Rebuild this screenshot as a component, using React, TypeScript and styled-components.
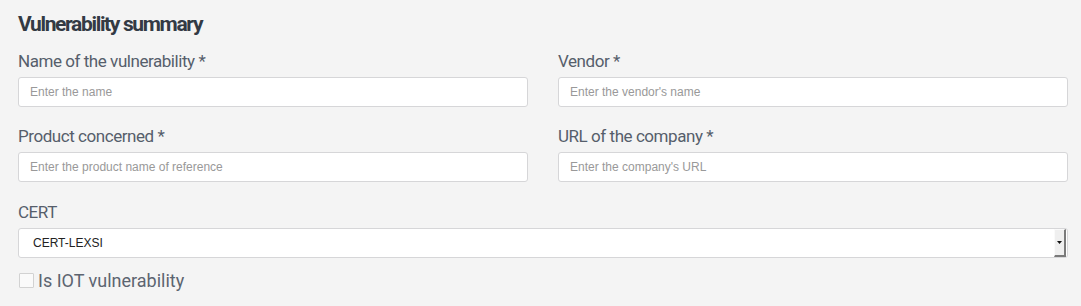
import React from "react";
import styled, { createGlobalStyle } from "styled-components";

const Global = createGlobalStyle`
  html, body { margin: 0; padding: 0; background: #f4f4f4; }
  body { font-family: Roboto, "Liberation Sans", sans-serif; }
  * { box-sizing: border-box; }
`;

const Page = styled.div`
  padding: 8px 13px 0 18px;
  width: 1081px;
  height: 306px;
  background: #f4f4f4;
`;

const Title = styled.h2`
  margin: 0 0 10px 0;
  font-family: Roboto, sans-serif;
  font-weight: 700;
  font-size: 21px;
  line-height: 32px;
  letter-spacing: -1.35px;
  color: #333a44;
`;

const Grid = styled.div`
  display: grid;
  grid-template-columns: 1fr 1fr;
  column-gap: 30px;
  row-gap: 18px;
`;

const Field = styled.div`
  display: flex;
  flex-direction: column;
`;

const Label = styled.label`
  font-family: Roboto, sans-serif;
  font-size: 17px;
  line-height: 22px;
  letter-spacing: -0.45px;
  color: #565e6b;
  margin-bottom: 5px;
`;

const Input = styled.input`
  height: 30px;
  width: 100%;
  border: 1px solid #d6d6d8;
  border-radius: 3px;
  background: #fff;
  padding: 0 11px;
  font-family: "Liberation Sans", Arial, sans-serif;
  font-size: 12px;
  color: #333;
  outline: none;
  &::placeholder { color: #999; }
`;

const CertField = styled(Field)`
  margin-top: 19px;
`;

const SelectBox = styled.div`
  position: relative;
  height: 30px;
  border: 1px solid #d6d6d8;
  border-radius: 3px;
  background: #fff;
  display: flex;
  align-items: center;
  padding-left: 14px;
  font-family: "Liberation Sans", Arial, sans-serif;
  font-size: 12px;
  color: #222;
`;

const ArrowButton = styled.div`
  position: absolute;
  right: 1px;
  top: 0px;
  bottom: 0px;
  width: 12px;
  background: #efefef;
  border-right: 2px solid #7a7a7a;
  border-bottom: 2px solid #7a7a7a;
  border-top: 1px solid #fafafa;
  border-left: 1px solid #fafafa;
  display: flex;
  align-items: center;
  justify-content: center;
`;

const CheckRow = styled.label`
  display: flex;
  align-items: center;
  margin-top: 12px;
  margin-left: 1px;
  font-family: Roboto, sans-serif;
  font-size: 18px;
  color: #5c6470;
`;

const CheckBox = styled.span`
  width: 15px;
  height: 15px;
  border: 1px solid #d2d2d2;
  background: #fafafa;
  border-radius: 1px;
  margin-right: 4px;
`;

export default function App() {
  return (
    <>
      <Global />
      <Page>
        <Title>Vulnerability summary</Title>
        <Grid>
          <Field>
            <Label>Name of the vulnerability *</Label>
            <Input placeholder="Enter the name" />
          </Field>
          <Field>
            <Label>Vendor *</Label>
            <Input placeholder="Enter the vendor's name" />
          </Field>
          <Field>
            <Label>Product concerned *</Label>
            <Input placeholder="Enter the product name of reference" />
          </Field>
          <Field>
            <Label>URL of the company *</Label>
            <Input placeholder="Enter the company's URL" />
          </Field>
        </Grid>
        <CertField>
          <Label>CERT</Label>
          <SelectBox>
            CERT-LEXSI
            <ArrowButton>
              <svg width="5" height="3" viewBox="0 0 5 3">
                <path d="M0 0h5L2.5 3z" fill="#111" />
              </svg>
            </ArrowButton>
          </SelectBox>
        </CertField>
        <CheckRow>
          <CheckBox />
          Is IOT vulnerability
        </CheckRow>
      </Page>
    </>
  );
}
